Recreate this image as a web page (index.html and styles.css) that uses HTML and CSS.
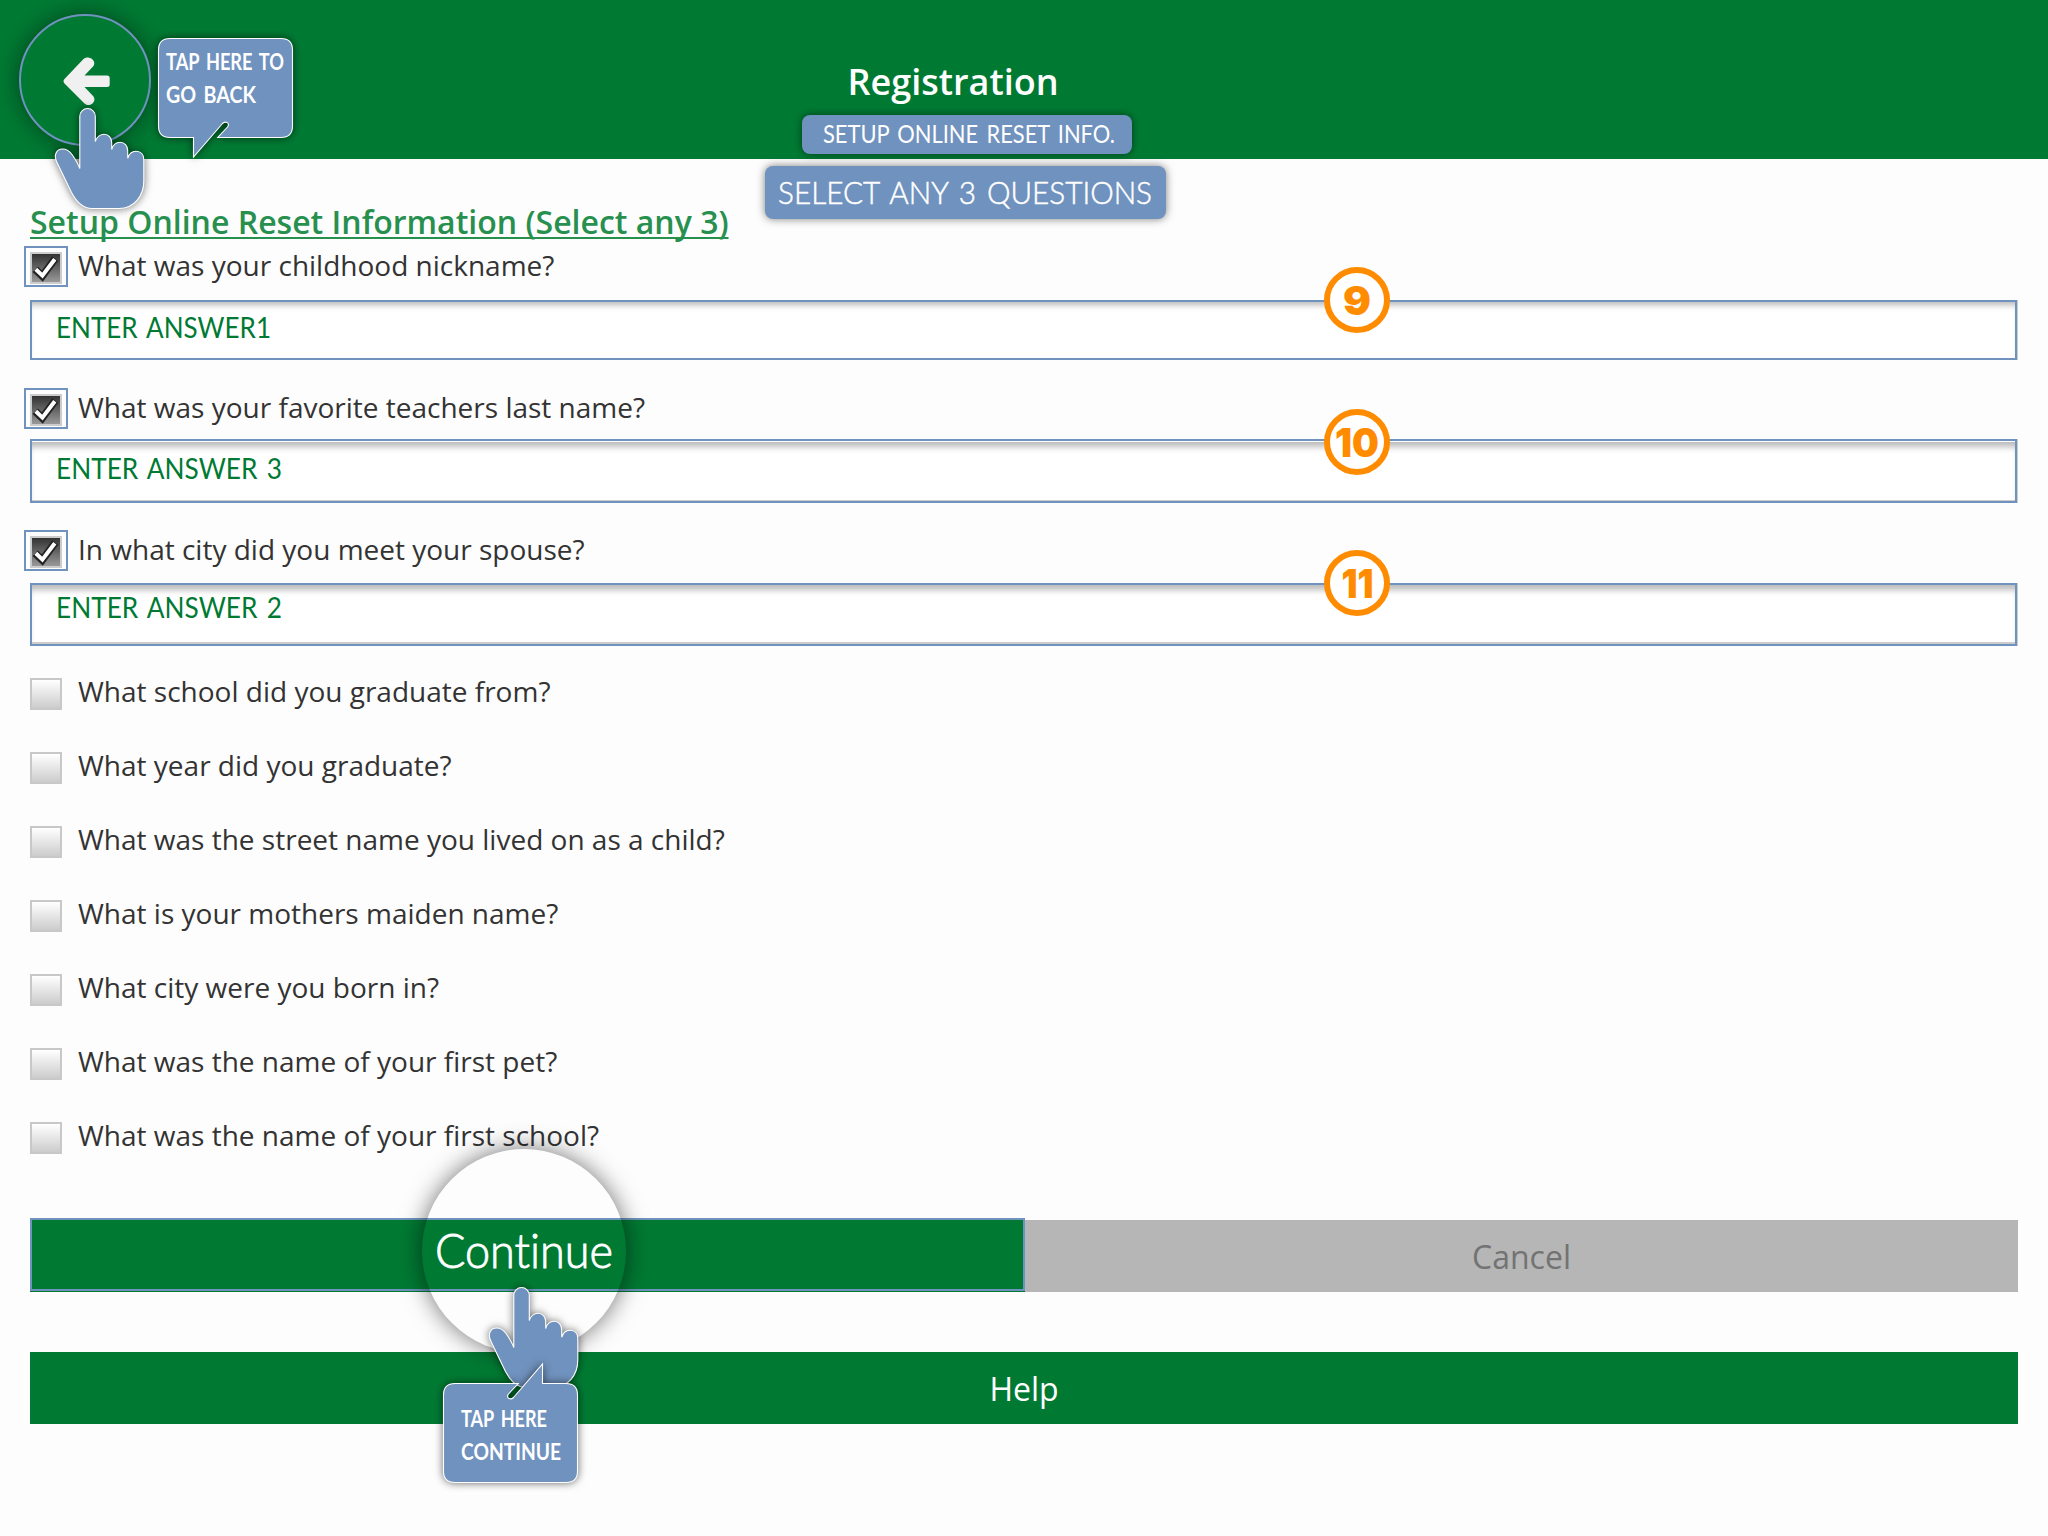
FILE: index.html
```html
<!DOCTYPE html>
<html lang="en">
<head>
<meta charset="utf-8">
<title>Registration</title>
<link rel="stylesheet" href="styles.css">
</head>
<body>
<svg class="defs" width="0" height="0" aria-hidden="true">
  <defs>
    <linearGradient id="tick-bg" x1="0" y1="0" x2="0" y2="1">
      <stop offset="0" stop-color="#333"/><stop offset="1" stop-color="#999"/>
    </linearGradient>
    <symbol id="check" viewBox="0 0 32 32">
      <rect width="32" height="32" fill="#ccc"/>
      <rect x="2" y="2" width="28" height="28" fill="url(#tick-bg)"/>
      <path d="M5.200 17.200 L12.300 24 L25.200 6.500" fill="none" stroke="#222" stroke-width="7.600"/>
      <path d="M5.800 17.300 L12.400 23.600 L24.800 7.200" fill="none" stroke="#fff" stroke-width="4"/>
    </symbol>
    <symbol id="hand" viewBox="50 100 100 115">
      <path d="M79.8 116.3 a7.75 7.75 0 0 1 15.5 0 V141.5 C97 136.500 101 134.300 104 134.300 C108.500 134.300 111.700 137.800 111.700 142.500 V149.500 C113 145 116.500 142.300 120 142.300 C124.500 142.300 127.700 146 127.700 150.500 V158.300 C129 154 132 151.300 136 151.300 C141 151.300 143.800 154.800 143.800 159.500 V181 C143.800 196 134 208.500 119 208.500 H92 C83 208.500 76 201 71.500 192.500 L57 162.500 C53 154.500 57 149 62.500 149 C67 149 69.500 151 72 154.500 C75.500 159.500 78 163.500 79.800 168.500 Z"/>
    </symbol>
  </defs>
</svg>

<header class="topbar">
  <h1 class="title">Registration</h1>
  <svg class="pill pill-small" width="330" height="39"><text x="21" y="28" textLength="292" lengthAdjust="spacingAndGlyphs">SETUP ONLINE RESET INFO.</text></svg>
</header>
<svg class="pill pill-large" width="401" height="53"><text x="13" y="37.500" textLength="374" lengthAdjust="spacingAndGlyphs">SELECT ANY 3 QUESTIONS</text></svg>

<main class="form">
  <h2 class="heading">Setup Online Reset Information (Select any 3)</h2>

  <section class="question answered">
    <div class="row"><span class="focus"><svg class="box"><use href="#check"/></svg></span><span class="label">What was your childhood nickname?</span></div>
    <div class="field field-1"><svg class="answer" width="300" height="50"><text x="24" y="36" textLength="215" lengthAdjust="spacingAndGlyphs">ENTER ANSWER1</text></svg>
      <svg class="badge" width="66" height="66"><circle cx="33" cy="33" r="30"/><text x="19" y="48" textLength="28" lengthAdjust="spacingAndGlyphs">9</text></svg></div>
  </section>
  <section class="question answered">
    <div class="row"><span class="focus"><svg class="box"><use href="#check"/></svg></span><span class="label">What was your favorite teachers last name?</span></div>
    <div class="field field-2"><svg class="answer" width="300" height="50"><text x="24" y="38" textLength="226" lengthAdjust="spacingAndGlyphs">ENTER ANSWER 3</text></svg>
      <svg class="badge" width="66" height="66"><circle cx="33" cy="33" r="30"/><text x="11" y="48" textLength="44" lengthAdjust="spacingAndGlyphs">10</text></svg></div>
  </section>
  <section class="question answered">
    <div class="row"><span class="focus"><svg class="box"><use href="#check"/></svg></span><span class="label">In what city did you meet your spouse?</span></div>
    <div class="field field-3"><svg class="answer" width="300" height="50"><text x="24" y="33" textLength="226" lengthAdjust="spacingAndGlyphs">ENTER ANSWER 2</text></svg>
      <svg class="badge" width="66" height="66"><circle cx="33" cy="33" r="30"/><text x="17.500" y="48" textLength="32" lengthAdjust="spacingAndGlyphs">11</text></svg></div>
  </section>

  <div class="row question"><span class="box empty"></span><span class="label">What school did you graduate from?</span></div>
  <div class="row question"><span class="box empty"></span><span class="label">What year did you graduate?</span></div>
  <div class="row question"><span class="box empty"></span><span class="label">What was the street name you lived on as a child?</span></div>
  <div class="row question"><span class="box empty"></span><span class="label">What is your mothers maiden name?</span></div>
  <div class="row question"><span class="box empty"></span><span class="label">What city were you born in?</span></div>
  <div class="row question"><span class="box empty"></span><span class="label">What was the name of your first pet?</span></div>
  <div class="row question"><span class="box empty"></span><span class="label">What was the name of your first school?</span></div>

  <div class="actions">
    <div class="continue"></div>
    <div class="cancel">Cancel</div>
  </div>
  <div class="help">Help</div>
</main>

<!-- Tutorial overlay: back button -->
<div class="ring"></div>
<svg class="arrow" width="60" height="60" viewBox="56 51 60 60"><path d="M64.500 79 L83.500 59 C88.500 54.500 97 60.500 93.500 66 L84.500 75.500 H107 Q109.700 75.500 109.700 78 V84.500 Q109.700 87 107 87 H84.500 L93.500 96.500 C97 102 89.500 108 84.500 103.500 L64.500 83.500 Q62.500 81.200 64.500 79 Z"/></svg>
<svg class="hand hand-back" width="100" height="115"><use href="#hand"/></svg>
<svg class="bubble bubble-back" width="155" height="140" viewBox="148 28 155 140">
  <path d="M170 38.500 H281 Q292.500 38.500 292.500 50 V126 Q292.500 137.500 281 137.500 H217.800 L227.500 127 C230.500 123 225.500 120.500 222.500 123.500 L193.500 157 V137.500 H170 Q158.500 137.500 158.500 126 V50 Q158.500 38.500 170 38.500 Z"/>
  <text x="166" y="70.300" textLength="118" lengthAdjust="spacingAndGlyphs">TAP HERE TO</text>
  <text x="166" y="103.300" textLength="90" lengthAdjust="spacingAndGlyphs">GO BACK</text>
</svg>

<!-- Tutorial overlay: continue button -->
<svg class="lens" width="204" height="204"><text x="13" y="119" textLength="178" lengthAdjust="spacingAndGlyphs">Continue</text></svg>
<svg class="hand hand-continue" width="100" height="115"><use href="#hand"/></svg>
<svg class="bubble bubble-continue" width="155" height="140" viewBox="433 1353 155 140">
  <path transform="rotate(180 368 760.500)" d="M170 38.500 H281 Q292.500 38.500 292.500 50 V126 Q292.500 137.500 281 137.500 H217.800 L227.500 127 C230.500 123 225.500 120.500 222.500 123.500 L193.500 157 V137.500 H170 Q158.500 137.500 158.500 126 V50 Q158.500 38.500 170 38.500 Z"/>
  <text x="461" y="1427.300" textLength="86" lengthAdjust="spacingAndGlyphs">TAP HERE</text>
  <text x="461" y="1460.300" textLength="100" lengthAdjust="spacingAndGlyphs">CONTINUE</text>
</svg>
</body>
</html>
```
FILE: styles.css
```css
* { box-sizing: border-box; }
body {
  margin: 0;
  position: relative;
  width: 2048px;
  height: 1536px;
  overflow: hidden;
  background: #fdfdfd;
  font-family: "Open Sans", "Noto Sans", sans-serif;
  color: #333;
}
svg { display: block; overflow: visible; }
svg text {
  font-family: Lato, "Open Sans", sans-serif;
  font-variant-ligatures: none;
  word-spacing: 3px;
}
.defs { position: absolute; }

.topbar {
  height: 159px;
  background: #007a33;
  padding: 58px 142px 0 0;
}
.title {
  margin: 0;
  height: 57px;
  line-height: 48px;
  font-size: 36px;
  font-weight: 600;
  text-align: center;
  color: #fff;
}
.pill {
  background: #7092be;
  border-radius: 8px;
  fill: #fff;
  box-shadow: 0 0 8px rgba(0, 0, 0, .5);
}
.pill-small { margin-left: 802px; font-size: 25px; }
.pill-large {
  position: absolute;
  left: 765px;
  top: 166px;
  font-size: 31px;
}
.pill-large text { font-weight: 300; stroke: #fff; stroke-width: .5; }

.form { padding: 0 30px; }
.heading {
  margin: 0;
  height: 87px;
  padding-top: 41px;
  font-size: 32px;
  line-height: 44px;
  font-weight: 600;
  color: #27904f;
  white-space: nowrap;
  text-decoration: underline;
  text-decoration-thickness: 2px;
  text-underline-offset: 3px;
  text-decoration-skip-ink: none;
}
.row { display: flex; height: 41px; }
.question { height: 74px; }
.question.answered { height: 142px; }
.focus {
  width: 44px;
  height: 41px;
  margin-left: -6px;
  border: 2px solid #7092be;
  padding: 4px;
}
.box { width: 32px; height: 32px; flex: none; }
.empty {
  margin-top: 6px;
  border: 2px solid #c8c8c8;
  background: linear-gradient(#fff, #ccc);
}
.label {
  margin-left: 16px;
  font-size: 28px;
  line-height: 38px;
  white-space: nowrap;
}
.focus + .label { margin-left: 10px; }

.field {
  position: relative;
  width: 1987px;
  background: #fff;
  border: 2px solid #7092be;
}
.field-1 {
  margin-top: 13px;
  height: 60px;
  box-shadow: 1px 0 #ccc, inset 0 7px 6px -4px #b8b8b8;
}
.field-2 {
  margin-top: 10px;
  height: 64px;
  box-shadow: 1px 0 #ccc, inset 0 1px #fff, inset 0 -1px #ccc, inset 0 9px 6px -3px #bbb;
}
.field-3 {
  margin-top: 12px;
  height: 63px;
  box-shadow: 1px 0 #ccc, inset 0 -2px #ccc, inset 0 8px 6px -3px #bbb;
}
.answer { fill: #007a33; font-size: 29px; }
.badge {
  position: absolute;
  left: 1292px;
  top: -35px;
  font-size: 40px;
}
.field-2 .badge { top: -32px; }
.field-3 .badge { top: -35px; }
.badge circle { fill: #fff; stroke: #ff8c00; stroke-width: 6; }
.badge text { font-family: Inter, sans-serif; fill: #ff8c00; font-weight: 900; }

.actions { display: flex; margin-top: 28px; height: 74px; }
.continue {
  width: 995px;
  height: 73px;
  background: #007a33;
  border: 2px solid #7092be;
  box-shadow: 0 1px #007a33;
}
.cancel {
  flex: 1;
  margin: 2px 0 0 0;
  background: #b6b6b6;
  color: #737373;
  font-size: 32px;
  line-height: 73px;
  text-align: center;
}
.help {
  margin-top: 60px;
  height: 72px;
  line-height: 73px;
  background: #007a33;
  color: #fff;
  font-size: 32px;
  text-align: center;
}

.ring {
  position: absolute;
  left: 19px;
  top: 14px;
  width: 132px;
  height: 132px;
  border: 2px solid #7092be;
  border-radius: 50%;
  background: #007a33;
  box-shadow: 0 0 24px rgba(0, 0, 0, .45);
}
.arrow { position: absolute; left: 56px; top: 51px; fill: #f0f0f1; }
.hand {
  position: absolute;
  fill: #7092be;
  stroke: #fff;
  stroke-width: 1.1;
  filter: drop-shadow(0 0 4px rgba(0, 0, 0, .55));
}
.hand-back { left: 50px; top: 100px; }
.hand-continue { left: 484px; top: 1279px; }
.bubble { position: absolute; font-size: 22px; }
.bubble-back { left: 148px; top: 28px; }
.bubble-continue { left: 433px; top: 1353px; }
.bubble path {
  fill: #7092be;
  stroke: #fff;
  stroke-width: 1.1;
  filter: drop-shadow(0 0 4px rgba(0, 0, 0, .6));
}
.bubble text { fill: #fff; font-weight: 700; }
.lens {
  position: absolute;
  left: 422px;
  top: 1149px;
  border-radius: 50%;
  box-shadow: 0 0 24px rgba(0, 0, 0, .55);
  fill: #fff;
  font-size: 48px;
}
.lens text { font-weight: 300; stroke: #fff; stroke-width: .9; }
```
